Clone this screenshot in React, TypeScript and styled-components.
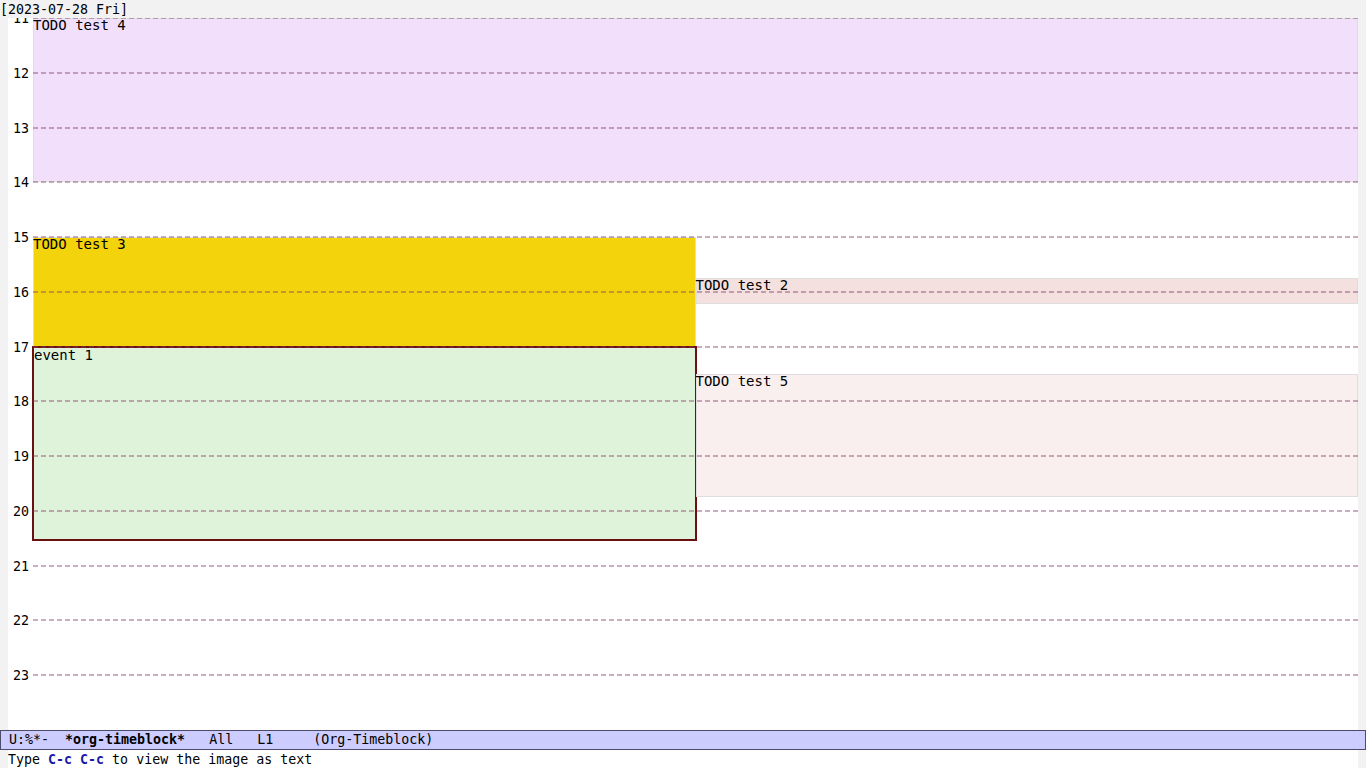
import React from "react";
import styled, { createGlobalStyle } from "styled-components";

const HOUR_HEIGHT = 54.75;
const FIRST_HOUR = 11;
const LABEL_WIDTH = 25;
const LANE_WIDTH = 1325;

type Block = {
    title: string;
    start: number;
    end: number;
    column: number;
    columns: number;
    color: string;
    selected?: boolean;
};

const blocks: Block[] = [
    { title: "TODO test 4", start: 11, end: 14, column: 0, columns: 1, color: "#f1dffb" },
    { title: "TODO test 3", start: 15, end: 17, column: 0, columns: 2, color: "#f3d30b" },
    { title: "TODO test 2", start: 15.75, end: 16.23, column: 1, columns: 2, color: "#f3e0df" },
    { title: "event 1", start: 17, end: 20.53, column: 0, columns: 2, color: "#dff3da", selected: true },
    { title: "TODO test 5", start: 17.5, end: 19.75, column: 1, columns: 2, color: "#f9efee" },
];

const hours = [11, 12, 13, 14, 15, 16, 17, 18, 19, 20, 21, 22, 23];

const GlobalStyle = createGlobalStyle`
    html, body {
        margin: 0;
        padding: 0;
        background: #f2f2f2;
        overflow: hidden;
    }
    body {
        font-family: "DejaVu Sans Mono", "Liberation Mono", monospace;
        color: #000000;
    }
`;

const Frame = styled.div`
    width: 1366px;
    height: 768px;
    display: flex;
    flex-direction: column;
    background: #f2f2f2;
`;

const HeaderLine = styled.div`
    height: 18px;
    box-sizing: border-box;
    padding-top: 2px;
    font-size: 13.3px;
    line-height: 16px;
    white-space: pre;
`;

const Window = styled.div`
    height: 712px;
    display: flex;
    padding: 0 8px;
`;

const Canvas = styled.div`
    position: relative;
    flex: 1;
    background: #ffffff;
    overflow: hidden;
`;

const Grid = styled.div`
    position: relative;
    z-index: 2;
    display: flex;
    flex-direction: column;
    pointer-events: none;
`;

const HourRow = styled.div`
    height: ${HOUR_HEIGHT}px;
    display: flex;
    align-items: flex-start;
`;

const HourLabel = styled.div`
    width: ${LABEL_WIDTH}px;
    box-sizing: border-box;
    padding-right: 4px;
    text-align: right;
    font-size: 13.3px;
    line-height: 16px;
    transform: translateY(calc(-50% + 1px));
`;

const HourLine = styled.div`
    flex: 1;
    height: 2px;
    margin-top: -1px;
    background-image: repeating-linear-gradient(
        to right,
        rgba(130, 60, 100, 0.42) 0 5px,
        transparent 5px 8px
    );
`;

const Item = styled.div<{ $color: string; $selected?: boolean }>`
    position: absolute;
    z-index: 1;
    box-sizing: border-box;
    background: ${(p) => p.$color};
    box-shadow: ${(p) => (p.$selected ? "none" : "inset 0 0 0 1px #dedede")};
    outline: ${(p) => (p.$selected ? "2px solid #6b1010" : "none")};
    outline-offset: -1px;
    font-size: 14px;
    line-height: 15px;
    white-space: pre;
    padding: ${(p) => (p.$selected ? "1px 0 0 1px" : "0")};
`;

const ModeLine = styled.div`
    height: 20px;
    box-sizing: border-box;
    background: #ccccff;
    border: 1px solid #4b4b6b;
    font-size: 13.3px;
    line-height: 18px;
    white-space: pre;
    padding-left: 8px;
`;

const Strong = styled.span`
    font-weight: bold;
`;

const EchoArea = styled.div`
    height: 18px;
    box-sizing: border-box;
    padding-top: 1px;
    margin: 0 8px;
    background: #ffffff;
    font-size: 13.3px;
    line-height: 17px;
    white-space: pre;
`;

const Key = styled.span`
    font-weight: bold;
    color: #1a1aa6;
`;

function place(b: Block) {
    const width = LANE_WIDTH / b.columns;
    return {
        left: LABEL_WIDTH + b.column * width,
        width: width,
        top: (b.start - FIRST_HOUR) * HOUR_HEIGHT,
        height: (b.end - b.start) * HOUR_HEIGHT,
    };
}

export default function App() {
    return (
        <Frame>
            <GlobalStyle />
            <HeaderLine>[2023-07-28 Fri]</HeaderLine>
            <Window>
                <Canvas>
                    {blocks.map((b) => (
                        <Item key={b.title} $color={b.color} $selected={b.selected} style={place(b)}>
                            {b.title}
                        </Item>
                    ))}
                    <Grid>
                        {hours.map((h) => (
                            <HourRow key={h}>
                                <HourLabel>{h}</HourLabel>
                                <HourLine />
                            </HourRow>
                        ))}
                    </Grid>
                </Canvas>
            </Window>
            <ModeLine>
                U:%*-  <Strong>*org-timeblock*</Strong>   All   L1     (Org-Timeblock)
            </ModeLine>
            <EchoArea>
                Type <Key>C-c</Key> <Key>C-c</Key> to view the image as text
            </EchoArea>
        </Frame>
    );
}
